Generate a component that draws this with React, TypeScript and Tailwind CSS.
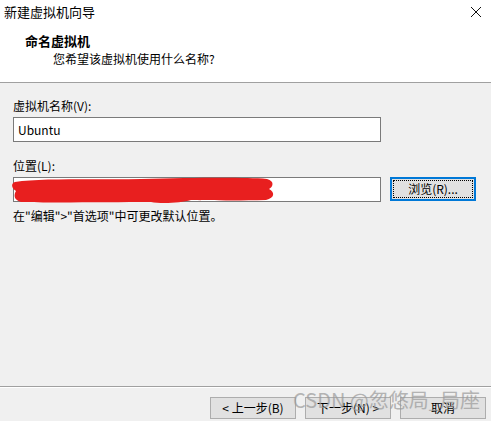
import React from 'react';

const font = { fontFamily: '"Noto Sans CJK SC", "Noto Sans", sans-serif' };

const WinButton: React.FC<{ label: React.ReactNode; focused?: boolean; className?: string }> = ({ label, focused, className }) => (
  <button
    className={`h-[22px] flex items-center justify-center text-[12px] leading-none text-black ${
      focused ? 'border-2 border-[#0078d7] bg-[#e5f1fb]' : 'border border-[#adadad] bg-[#e1e1e1]'
    } ${className ?? ''}`}
  >
    {label}
  </button>
);

export default function App() {
  return (
    <div className="relative w-[491px] h-[421px] bg-[#f0f0f0] flex flex-col overflow-hidden" style={font}>
      {/* header */}
      <div className="h-[82px] bg-white flex flex-col">
        <div className="h-[23px] flex items-center justify-between pl-[4px] pr-[8px]">
          <span className="text-[13px] leading-none text-black">新建虚拟机向导</span>
          <svg width="12" height="12" viewBox="0 0 12 12" className="mr-[1px]">
            <path d="M1 1 L11 11 M11 1 L1 11" stroke="#111" strokeWidth="1" />
          </svg>
        </div>
        <div className="pl-[25px] pt-[11px] text-[13px] font-bold leading-none text-black">命名虚拟机</div>
        <div className="pl-[53px] pt-[6px] text-[12px] leading-none text-black">您希望该虚拟机使用什么名称?</div>
      </div>
      <div className="h-px bg-[#a0a0a0]" />

      {/* body */}
      <div className="flex-1 flex flex-col px-[13px] pt-[17px] text-[12px] text-black">
        <div className="leading-none h-[12px]">虚拟机名称(V):</div>
        <div className="mt-[5px] w-[368px] h-[25px] bg-white border border-[#7a7a7a] flex items-center px-[4px] leading-none">
          Ubuntu
        </div>
        <div className="mt-[18px] leading-none h-[12px]">位置(L):</div>
        <div className="mt-[5px] flex gap-[9px]">
          <div className="relative w-[368px] h-[25px] bg-white border border-[#7a7a7a]">
            <svg className="absolute left-[-3px] top-[-2px]" width="266" height="28" viewBox="0 0 266 28">
              <path
                d="M4 6 C30 2 80 4 130 3 C180 2 230 1 256 3 C264 5 262 11 258 13 C264 16 264 22 255 24 C220 25 190 24 180 24 C170 27 150 28 140 26 C100 26 40 27 10 26 C2 24 3 18 5 15 C0 12 0 7 4 6 Z"
                fill="#e81f1f"
              />
            </svg>
          </div>
          <div className="w-[86px] h-[24px] border-2 border-[#0078d7] bg-[#e1e1e1] p-[1px]">
            <div className="w-full h-full border border-dotted border-black flex items-center justify-center leading-none">
              浏览(R)...
            </div>
          </div>
        </div>
        <div className="mt-[8px] leading-none">在"编辑"&gt;"首选项"中可更改默认位置。</div>
      </div>

      {/* footer */}
      <div className="h-px bg-[#a0a0a0]" />
      <div className="h-px bg-white" />
      <div className="h-[33px] flex items-start justify-end gap-[9px] pr-[5px] pt-[9px]">
        <WinButton className="w-[86px]" label="< 上一步(B)" />
        <WinButton className="w-[86px]" label="下一步(N) >" />
        <WinButton className="w-[86px]" label="取消" />
      </div>

      {/* watermark */}
      <div className="absolute left-[293px] top-[390px] text-[20px] leading-none text-[#9a9a9a] opacity-70 whitespace-nowrap pointer-events-none">
        CSDN @忽悠局_局座
      </div>
    </div>
  );
}
